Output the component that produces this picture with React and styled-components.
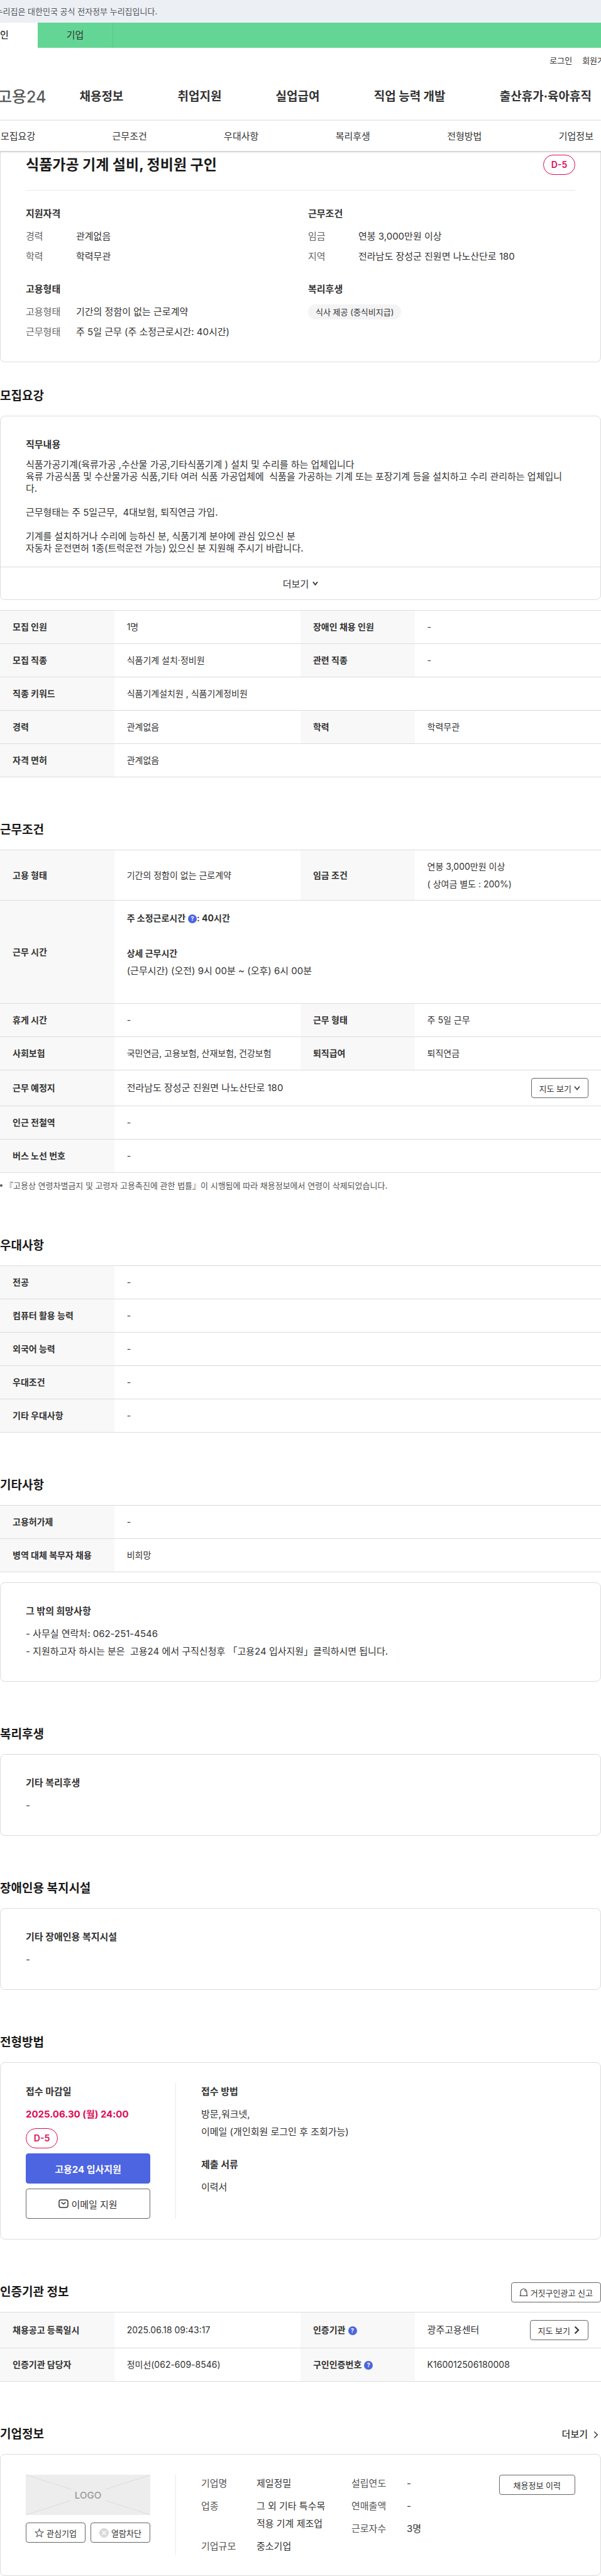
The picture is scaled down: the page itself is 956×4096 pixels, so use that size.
import React from "react";
import styled, { createGlobalStyle } from "styled-components";

const GlobalStyle = createGlobalStyle`
  * {
    box-sizing: border-box;
  }
  body {
    margin: 0;
    background: #fff;
    color: #333;
    font-family: "Inter", "Noto Sans CJK KR", sans-serif;
    font-size: 15px;
    line-height: 28px;
    overflow-x: hidden;
  }
  h1, h2, h3, p, dl, dd, ul {
    margin: 0;
    padding: 0;
  }
  ul {
    list-style: none;
  }
  a {
    color: inherit;
    text-decoration: none;
  }
  button {
    font-family: inherit;
    color: inherit;
    cursor: pointer;
  }
`;

const Page = styled.div`
  overflow: hidden;
`;

/* header */
const GovBar = styled.p`
  height: 36px;
  background: #ecf0f5;
  color: #555;
  font-size: 13px;
  line-height: 36px;
  white-space: nowrap;

  span {
    margin-left: -23px;
  }
`;

const MemberTabs = styled.nav`
  display: flex;
  height: 40px;
  background: #63d695;

  a {
    flex: none;
    width: 120px;
    line-height: 40px;
    text-align: center;
    border-right: 1px solid #59c888;
  }
  a.on {
    margin-left: -60px;
    background: #fff;
    border-right: 0;
    font-weight: 500;
  }
`;

const UserLinks = styled.div`
  display: flex;
  justify-content: flex-end;
  gap: 16px;
  height: 40px;
  margin-right: -18px;
  font-size: 13px;
  line-height: 40px;
  white-space: nowrap;
`;

const MainNav = styled.nav`
  display: flex;
  align-items: center;
  height: 75px;
  padding-right: 15px;
  font-size: 19px;
  font-weight: 700;
  white-space: nowrap;
`;

const Logo = styled.a`
  margin-left: -4px;
  color: #5a5a5a;
  font-size: 25px;
  font-weight: 500;
`;

const Menu = styled.div`
  flex: 1;
  display: flex;
  justify-content: space-between;
  margin-left: 53px;
`;

const AnchorNav = styled.nav`
  position: relative;
  display: flex;
  justify-content: space-between;
  height: 49px;
  padding: 0 12px 0 1px;
  border-top: 1px solid #e9e9e9;
  background: #fff;
  line-height: 49px;
  box-shadow: 0 1px 3px rgba(0, 0, 0, 0.3);
`;

/* common parts */
const Card = styled.div`
  padding: ${(p) => p.$pad || "31px 40px 33px"};
  border: 1px solid #dcdcdc;
  border-radius: 8px;
  margin-top: ${(p) => p.$top || 0}px;
`;

const Section = styled.section`
  margin-top: ${(p) => p.$gap || 69}px;
`;

const SectionHead = styled.div`
  display: flex;
  justify-content: space-between;
  align-items: center;
  height: 30px;
  margin-bottom: 16px;
`;

const H2 = styled.h2`
  color: #1a1a1a;
  font-size: 19px;
  font-weight: 700;
  line-height: 30px;
`;

const H3 = styled.h3`
  margin-bottom: 8px;
  font-size: 15px;
  font-weight: 700;
  line-height: 28px;
`;

const DDay = styled.span`
  display: inline-flex;
  align-items: center;
  justify-content: center;
  width: 51px;
  height: 32px;
  border: 1px solid #de0a54;
  border-radius: 16px;
  color: #de0a54;
  font-size: 14px;
  font-weight: 600;
`;

const Button = styled.button`
  display: inline-flex;
  align-items: center;
  justify-content: center;
  gap: 4px;
  height: 32px;
  padding: ${(p) => p.$pad || "0 12px"};
  border: 1px solid #666;
  border-radius: 4px;
  background: #fff;
  font-size: 13px;
  white-space: nowrap;
`;

const Table = styled.table`
  width: 100%;
  table-layout: fixed;
  border-collapse: separate;
  border-spacing: 0;
  border-top: 1px solid #dcdcdc;
  font-size: 14px;

  th,
  td {
    height: 53px;
    border-bottom: 1px solid #dcdcdc;
  }
  .button > * {
    height: 57px;
  }
  .wage > * {
    height: 80px;
  }
  .hours > * {
    height: 164px;
  }
  th {
    padding: 0 0 0 20px;
    background: #f8f8f8;
    text-align: left;
    font-weight: 700;
    white-space: nowrap;
  }
  td {
    padding: 0 20px;
  }
`;

const Hours = styled.div`
  display: flex;
  flex-direction: column;
  padding-bottom: 24px;

  strong:first-child {
    margin-bottom: 28px;
  }
  span {
    font-size: 15px;
  }
`;

const Spread = styled.div`
  display: flex;
  align-items: center;
  justify-content: space-between;
  font-size: 15px;
`;

const HelpDot = styled.button`
  display: inline-flex;
  align-items: center;
  justify-content: center;
  width: 14px;
  height: 14px;
  padding: 0;
  margin-left: 4px;
  border: 0;
  border-radius: 50%;
  background: #4d65e0;
  color: #fff;
  font-size: 9px;
  font-weight: 700;
  line-height: 14px;
  vertical-align: middle;
`;

/* summary */
const SummaryCard = styled.div`
  padding: 6px 40px 33px;
  border: 1px solid #dcdcdc;
  border-top: 0;
  border-radius: 0 0 8px 8px;
`;

const Title = styled.div`
  display: flex;
  align-items: center;
  justify-content: space-between;
  height: 57px;
  padding-bottom: 25px;
  border-bottom: 1px solid #e9e9e9;

  h1 {
    color: #1a1a1a;
    font-size: 23px;
    font-weight: 700;
  }
`;

const Summary = styled.div`
  display: grid;
  grid-template-columns: 1fr 1fr;
  column-gap: 24px;
  row-gap: 24px;
  padding-top: 23px;
`;

const Facts = styled.dl`
  display: grid;
  grid-template-columns: 80px 1fr;
  row-gap: 4px;

  dt {
    color: #666;
  }
`;

const Chip = styled.span`
  display: inline-block;
  height: 24px;
  padding: 0 12px;
  border-radius: 12px;
  background: #f4f4f4;
  font-size: 13px;
  line-height: 24px;
`;

const Description = styled.div`
  padding: 31px 56px 20px 40px;

  p {
    line-height: 19px;
    white-space: pre-wrap;
  }
`;

const MoreButton = styled.button`
  display: flex;
  align-items: center;
  justify-content: center;
  gap: 6px;
  width: 100%;
  height: 52px;
  border: 0;
  border-top: 1px solid #dcdcdc;
  background: none;
  font-size: 15px;
`;

const Note = styled.ul`
  padding-top: 8px;
  color: #555;
  font-size: 13px;
  line-height: 24px;

  li {
    display: flex;
    align-items: center;
    gap: 4px;
  }
  li::before {
    content: "";
    width: 4px;
    height: 4px;
    border-radius: 50%;
    background: #555;
  }
`;

/* how to apply / company */
const Split = styled.div`
  display: grid;
  grid-template-columns: 239px 1fr;
`;

const Left = styled.div`
  display: flex;
  flex-direction: column;
  padding-right: 40px;
  border-right: 1px solid #e9e9e9;
`;

const Right = styled.div`
  padding-left: 40px;

  p + h3 {
    margin-top: 24px;
  }
`;

const Deadline = styled.strong`
  color: #de0a54;
  margin-bottom: 8px;
`;

const ApplyButton = styled.button`
  display: flex;
  align-items: center;
  justify-content: center;
  gap: 4px;
  height: 48px;
  margin-top: 8px;
  border: 1px solid ${(p) => (p.$primary ? "#4d65e0" : "#666")};
  border-radius: 4px;
  background: ${(p) => (p.$primary ? "#4d65e0" : "#fff")};
  color: ${(p) => (p.$primary ? "#fff" : "#333")};
  font-size: 15px;
  font-weight: ${(p) => (p.$primary ? 700 : 400)};
`;

const MoreLink = styled.a`
  display: flex;
  align-items: center;
  gap: 7px;
  padding-right: 3px;
  font-weight: 500;
`;

const LogoBox = styled.svg`
  display: block;
  width: 100%;
  height: 64px;
  margin-bottom: 12px;
  background: #ededed;
`;

const PairButtons = styled.div`
  display: grid;
  grid-template-columns: 1fr 1fr;
  gap: 8px;
`;

const Company = styled.div`
  display: flex;
  align-items: flex-start;
  padding-left: 40px;
`;

const CompanyFacts = styled.dl`
  display: grid;
  grid-template-columns: 88px ${(p) => p.$value}px;
  align-content: start;
  row-gap: 8px;
  width: ${(p) => p.$width}px;

  dt {
    color: #555;
  }
`;

const Push = styled.div`
  margin-left: auto;
  line-height: 0;
`;

const Chevron = ({ down, size = 8, stroke = 1.5 }) => (
  <svg width={size} height={size} viewBox="0 0 10 10" fill="none" stroke="#333" strokeWidth={stroke}>
    <path d={down ? "M1 2.5 L5 7.5 L9 2.5" : "M3 0.5 L7.5 5 L3 9.5"} />
  </svg>
);

const MailIcon = () => (
  <svg width="16" height="14" viewBox="0 0 16 14" fill="none" stroke="#333" strokeWidth="1.5">
    <rect x="1" y="1" width="14" height="12" rx="3" />
    <path d="M4.5 4.8 L8 7.5 L11.5 4.8" />
  </svg>
);

const SirenIcon = () => (
  <svg width="14" height="14" viewBox="0 0 14 14" fill="none" stroke="#333" strokeWidth="1.1">
    <path d="M2 12 V6.5 A5 5 0 0 1 12 6.5 V12 M0.5 12.5 H13.5 M8 3.5 Q9.7 4.2 9.9 6" />
  </svg>
);

const StarIcon = () => (
  <svg width="15" height="15" viewBox="0 0 16 16" fill="none" stroke="#666" strokeWidth="1.3">
    <path d="M8 1.5 L9.8 6 L14.8 6.3 L11 9.5 L12.2 14.3 L8 11.7 L3.8 14.3 L5 9.5 L1.2 6.3 L6.2 6 Z" />
  </svg>
);

const BlockIcon = () => (
  <svg width="15" height="15" viewBox="0 0 14 14">
    <circle cx="7" cy="7" r="7" fill="#d8d8d8" />
    <path d="M4 4 L10 10 M10 4 L4 10" stroke="#fff" strokeWidth="1.4" />
  </svg>
);

const Help = () => <HelpDot aria-label="도움말">?</HelpDot>;

const Cols = () => (
  <colgroup>
    <col width="19%" />
    <col width="31%" />
    <col width="19%" />
    <col width="31%" />
  </colgroup>
);

// each row is [label, value] or [label, value, label, value]
function InfoTable({ rows }) {
  return (
    <Table>
      <Cols />
      <tbody>
        {rows.map(([label, value, label2, value2]) => (
          <tr key={label}>
            <th scope="row">{label}</th>
            <td colSpan={label2 ? 1 : 3}>{value}</td>
            {label2 && <th scope="row">{label2}</th>}
            {label2 && <td>{value2}</td>}
          </tr>
        ))}
      </tbody>
    </Table>
  );
}

const menus = ["채용정보", "취업지원", "실업급여", "직업 능력 개발", "출산휴가·육아휴직"];
const anchors = ["모집요강", "근무조건", "우대사항", "복리후생", "전형방법", "기업정보"];

const recruitRows = [
  ["모집 인원", "1명", "장애인 채용 인원", "-"],
  ["모집 직종", "식품기계 설치·정비원", "관련 직종", "-"],
  ["직종 키워드", "식품기계설치원 , 식품기계정비원"],
  ["경력", "관계없음", "학력", "학력무관"],
  ["자격 면허", "관계없음"],
];

const preferRows = [
  ["전공", "-"],
  ["컴퓨터 활용 능력", "-"],
  ["외국어 능력", "-"],
  ["우대조건", "-"],
  ["기타 우대사항", "-"],
];

const etcRows = [
  ["고용허가제", "-"],
  ["병역 대체 복무자 채용", "비희망"],
];

const description = `식품가공기계(육류가공 ,수산물 가공,기타식품기계 ) 설치 및 수리를 하는 업체입니다
육류 가공식품 및 수산물가공 식품,기타 여러 식품 가공업체에  식품을 가공하는 기계 또는 포장기계 등을 설치하고 수리 관리하는 업체입니다.

근무형태는 주 5일근무,  4대보험, 퇴직연금 가입.

기계를 설치하거나 수리에 능하신 분, 식품기계 분야에 관심 있으신 분
자동차 운전면허 1종(트럭운전 가능) 있으신 분 지원해 주시기 바랍니다.`;

function App() {
  return (
    <Page>
      <GlobalStyle />
      <header>
        <GovBar>
          <span>이 누리집은 대한민국 공식 전자정부 누리집입니다.</span>
        </GovBar>
        <MemberTabs>
          <a href="#personal" className="on">개인</a>
          <a href="#company">기업</a>
        </MemberTabs>
        <UserLinks>
          <a href="#login">로그인</a>
          <a href="#join">회원가입</a>
        </UserLinks>
        <MainNav>
          <Logo href="#home">고용24</Logo>
          <Menu>
            {menus.map((m) => (
              <a href="#menu" key={m}>{m}</a>
            ))}
          </Menu>
        </MainNav>
        <AnchorNav>
          {anchors.map((a) => (
            <a href={`#${a}`} key={a}>{a}</a>
          ))}
        </AnchorNav>
      </header>

      <main>
        <SummaryCard>
          <Title>
            <h1>식품가공 기계 설비, 정비원 구인</h1>
            <DDay>D-5</DDay>
          </Title>
          <Summary>
            <div>
              <H3>지원자격</H3>
              <Facts>
                <dt>경력</dt>
                <dd>관계없음</dd>
                <dt>학력</dt>
                <dd>학력무관</dd>
              </Facts>
            </div>
            <div>
              <H3>근무조건</H3>
              <Facts>
                <dt>임금</dt>
                <dd>연봉 3,000만원 이상</dd>
                <dt>지역</dt>
                <dd>전라남도 장성군 진원면 나노산단로 180</dd>
              </Facts>
            </div>
            <div>
              <H3>고용형태</H3>
              <Facts>
                <dt>고용형태</dt>
                <dd>기간의 정함이 없는 근로계약</dd>
                <dt>근무형태</dt>
                <dd>주 5일 근무 (주 소정근로시간: 40시간)</dd>
              </Facts>
            </div>
            <div>
              <H3>복리후생</H3>
              <Chip>식사 제공 (중식비지급)</Chip>
            </div>
          </Summary>
        </SummaryCard>

        <Section $gap={39} id="모집요강">
          <SectionHead>
            <H2>모집요강</H2>
          </SectionHead>
          <Card $pad="0">
            <Description>
              <H3>직무내용</H3>
              <p>{description}</p>
            </Description>
            <MoreButton>
              더보기 <Chevron down size={9} stroke={2} />
            </MoreButton>
          </Card>
        </Section>
        <Section $gap={16}>
          <InfoTable rows={recruitRows} />
        </Section>

        <Section id="근무조건">
          <SectionHead>
            <H2>근무조건</H2>
          </SectionHead>
          <Table>
            <Cols />
            <tbody>
              <tr className="wage">
                <th scope="row">고용 형태</th>
                <td>기간의 정함이 없는 근로계약</td>
                <th scope="row">임금 조건</th>
                <td>
                  연봉 3,000만원 이상
                  <br />( 상여금 별도 : 200%)
                </td>
              </tr>
              <tr className="hours">
                <th scope="row">근무 시간</th>
                <td colSpan={3}>
                  <Hours>
                    <strong>
                      주 소정근로시간
                      <Help />: 40시간
                    </strong>
                    <strong>상세 근무시간</strong>
                    <span>(근무시간) (오전) 9시 00분 ~ (오후) 6시 00분</span>
                  </Hours>
                </td>
              </tr>
              <tr>
                <th scope="row">휴게 시간</th>
                <td>-</td>
                <th scope="row">근무 형태</th>
                <td>주 5일 근무</td>
              </tr>
              <tr>
                <th scope="row">사회보험</th>
                <td>국민연금, 고용보험, 산재보험, 건강보험</td>
                <th scope="row">퇴직급여</th>
                <td>퇴직연금</td>
              </tr>
              <tr className="button">
                <th scope="row">근무 예정지</th>
                <td colSpan={3}>
                  <Spread>
                    전라남도 장성군 진원면 나노산단로 180
                    <Button>
                      지도 보기 <Chevron down size={10} />
                    </Button>
                  </Spread>
                </td>
              </tr>
              <tr>
                <th scope="row">인근 전철역</th>
                <td colSpan={3}>-</td>
              </tr>
              <tr>
                <th scope="row">버스 노선 번호</th>
                <td colSpan={3}>-</td>
              </tr>
            </tbody>
          </Table>
          <Note>
            <li>『고용상 연령차별금지 및 고령자 고용촉진에 관한 법률』이 시행됨에 따라 채용정보에서 연령이 삭제되었습니다.</li>
          </Note>
        </Section>

        <Section id="우대사항">
          <SectionHead>
            <H2>우대사항</H2>
          </SectionHead>
          <InfoTable rows={preferRows} />
        </Section>

        <Section>
          <SectionHead>
            <H2>기타사항</H2>
          </SectionHead>
          <InfoTable rows={etcRows} />
          <Card $top={16}>
            <H3>그 밖의 희망사항</H3>
            <p>- 사무실 연락처: 062-251-4546</p>
            <p>- 지원하고자 하시는 분은 &nbsp;고용24 에서 구직신청후 「고용24 입사지원」클릭하시면 됩니다.</p>
          </Card>
        </Section>

        <Section id="복리후생">
          <SectionHead>
            <H2>복리후생</H2>
          </SectionHead>
          <Card>
            <H3>기타 복리후생</H3>
            <p>-</p>
          </Card>
        </Section>

        <Section>
          <SectionHead>
            <H2>장애인용 복지시설</H2>
          </SectionHead>
          <Card>
            <H3>기타 장애인용 복지시설</H3>
            <p>-</p>
          </Card>
        </Section>

        <Section id="전형방법">
          <SectionHead>
            <H2>전형방법</H2>
          </SectionHead>
          <Card $pad="32px 40px">
            <Split>
              <Left>
                <H3>접수 마감일</H3>
                <Deadline>2025.06.30 (월) 24:00</Deadline>
                <DDay>D-5</DDay>
                <ApplyButton $primary>고용24 입사지원</ApplyButton>
                <ApplyButton>
                  <MailIcon />
                  이메일 지원
                </ApplyButton>
              </Left>
              <Right>
                <H3>접수 방법</H3>
                <p>방문,워크넷,</p>
                <p>이메일 (개인회원 로그인 후 조회가능)</p>
                <H3>제출 서류</H3>
                <p>이력서</p>
              </Right>
            </Split>
          </Card>
        </Section>

        <Section>
          <SectionHead>
            <H2>인증기관 정보</H2>
            <Button>
              <SirenIcon />
              거짓구인광고 신고
            </Button>
          </SectionHead>
          <Table>
            <Cols />
            <tbody>
              <tr className="button">
                <th scope="row">채용공고 등록일시</th>
                <td>2025.06.18 09:43:17</td>
                <th scope="row">
                  인증기관
                  <Help />
                </th>
                <td>
                  <Spread>
                    광주고용센터
                    <Button>
                      지도 보기 <Chevron size={12} stroke={1.8} />
                    </Button>
                  </Spread>
                </td>
              </tr>
              <tr>
                <th scope="row">인증기관 담당자</th>
                <td>정미선(062-609-8546)</td>
                <th scope="row">
                  구인인증번호
                  <Help />
                </th>
                <td>K160012506180008</td>
              </tr>
            </tbody>
          </Table>
        </Section>

        <Section id="기업정보">
          <SectionHead>
            <H2>기업정보</H2>
            <MoreLink href="#more">
              더보기 <Chevron size={11} stroke={1.3} />
            </MoreLink>
          </SectionHead>
          <Card $pad="32px 40px">
            <Split>
              <Left>
                <LogoBox viewBox="0 0 198 64" preserveAspectRatio="xMidYMid slice">
                  <path d="M0 0 L72 23 M127 41 L199 64 M199 0 L127 23 M72 41 L0 64" stroke="#dcdcdc" />
                  <text x="99" y="38" textAnchor="middle" fontSize="15" fontWeight="500" fill="#999">LOGO</text>
                </LogoBox>
                <PairButtons>
                  <Button $pad="0">
                    <StarIcon />
                    관심기업
                  </Button>
                  <Button $pad="0">
                    <BlockIcon />
                    열람차단
                  </Button>
                </PairButtons>
              </Left>
              <Company>
                <CompanyFacts $value={118} $width={239}>
                  <dt>기업명</dt>
                  <dd>제일정밀</dd>
                  <dt>업종</dt>
                  <dd>그 외 기타 특수목적용 기계 제조업</dd>
                  <dt>기업규모</dt>
                  <dd>중소기업</dd>
                </CompanyFacts>
                <CompanyFacts $value={60} $width={148}>
                  <dt>설립연도</dt>
                  <dd>-</dd>
                  <dt>연매출액</dt>
                  <dd>-</dd>
                  <dt>근로자수</dt>
                  <dd>3명</dd>
                </CompanyFacts>
                <Push>
                  <Button $pad="0 22px">채용정보 이력</Button>
                </Push>
              </Company>
            </Split>
          </Card>
        </Section>
      </main>
    </Page>
  );
}

export default App;
